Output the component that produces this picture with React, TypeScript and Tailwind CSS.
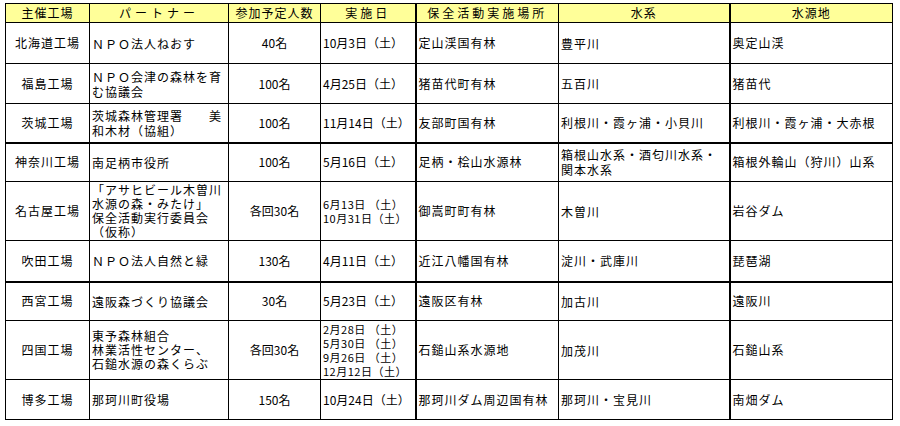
import { Fragment } from "react";
import type { ReactNode } from "react";

type Row = {
  factory: string;
  partner: ReactNode;
  partnerLeading?: string;
  people: string;
  dates: string[];
  place: string;
  river: string[];
  source: string;
  h: string;
  thick?: boolean;
};

const rows: Row[] = [
  {
    factory: "北海道工場",
    partner: "ＮＰＯ法人ねおす",
    people: "40名",
    dates: ["10月3日（土）"],
    place: "定山渓国有林",
    river: ["豊平川"],
    source: "奥定山渓",
    h: "h-[41px]",
  },
  {
    factory: "福島工場",
    partner: (
      <>
        ＮＰＯ会津の森林を育
        <br />
        む協議会
      </>
    ),
    people: "100名",
    dates: ["4月25日（土）"],
    place: "猪苗代町有林",
    river: ["五百川"],
    source: "猪苗代",
    h: "h-[40px]",
  },
  {
    factory: "茨城工場",
    partner: (
      <>
        <span className="flex justify-between pr-[6px]">
          <span>茨城森林管理署</span>
          <span>美</span>
        </span>
        和木材（協組）
      </>
    ),
    people: "100名",
    dates: ["11月14日（土）"],
    place: "友部町国有林",
    river: ["利根川・霞ヶ浦・小貝川"],
    source: "利根川・霞ヶ浦・大赤根",
    h: "h-[39px]",
    thick: true,
  },
  {
    factory: "神奈川工場",
    partner: "南足柄市役所",
    people: "100名",
    dates: ["5月16日（土）"],
    place: "足柄・桧山水源林",
    river: ["箱根山水系・酒匂川水系・", "関本水系"],
    source: "箱根外輪山（狩川）山系",
    h: "h-[39px]",
  },
  {
    factory: "名古屋工場",
    partner: (
      <>
        「アサヒビール木曽川
        <br />
        水源の森・みたけ」
        <br />
        保全活動実行委員会
        <br />
        （仮称）
      </>
    ),
    partnerLeading: "leading-[14px]",
    people: "各回30名",
    dates: ["6月13日 （土）", "10月31日（土）"],
    place: "御嵩町町有林",
    river: ["木曽川"],
    source: "岩谷ダム",
    h: "h-[59px]",
  },
  {
    factory: "吹田工場",
    partner: "ＮＰＯ法人自然と緑",
    people: "130名",
    dates: ["4月11日（土）"],
    place: "近江八幡国有林",
    river: ["淀川・武庫川"],
    source: "琵琶湖",
    h: "h-[41px]",
    thick: true,
  },
  {
    factory: "西宮工場",
    partner: "遠阪森づくり協議会",
    people: "30名",
    dates: ["5月23日（土）"],
    place: "遠阪区有林",
    river: ["加古川"],
    source: "遠阪川",
    h: "h-[39px]",
  },
  {
    factory: "四国工場",
    partner: (
      <>
        東予森林組合
        <br />
        林業活性センター、
        <br />
        石鎚水源の森くらぶ
      </>
    ),
    partnerLeading: "leading-[14px]",
    people: "各回30名",
    dates: ["2月28日 （土）", "5月30日 （土）", "9月26日 （土）", "12月12日（土）"],
    place: "石鎚山系水源地",
    river: ["加茂川"],
    source: "石鎚山系",
    h: "h-[59px]",
  },
  {
    factory: "博多工場",
    partner: "那珂川町役場",
    people: "150名",
    dates: ["10月24日（土）"],
    place: "那珂川ダム周辺国有林",
    river: ["那珂川・宝見川"],
    source: "南畑ダム",
    h: "h-[40px]",
  },
];

function Lines({ items }: { items: string[] }) {
  return (
    <>
      {items.map((t, i) => (
        <Fragment key={t}>
          {i > 0 && <br />}
          {t}
        </Fragment>
      ))}
    </>
  );
}

export default function App() {
  return (
    <div className="min-h-[426px] w-[900px] bg-white pt-[3px] pl-[5px] font-['Noto_Sans_CJK_JP',sans-serif] text-[12px] text-black">
      <table className="w-[887px] table-fixed border-collapse">
        <colgroup>
          <col className="w-[84px]" />
          <col className="w-[139px]" />
          <col className="w-[92px]" />
          <col className="w-[95px]" />
          <col className="w-[143px]" />
          <col className="w-[171px]" />
          <col className="w-[163px]" />
        </colgroup>
        <thead>
          <tr className="h-[19px] bg-[#ffff99] leading-[14px]">
            <th className="border border-black p-0 font-normal tracking-[1px]">主催工場</th>
            <th className="border border-black p-0 font-normal tracking-[4px]">パートナー</th>
            <th className="border border-black p-0 font-normal tracking-[1px]">参加予定人数</th>
            <th className="border border-black border-r-2 p-0 font-normal tracking-[3px]">実施日</th>
            <th className="border border-black p-0 font-normal tracking-[3px]">保全活動実施場所</th>
            <th className="border border-black border-r-2 p-0 font-normal tracking-[1px]">水系</th>
            <th className="border border-black p-0 font-normal tracking-[1px]">水源地</th>
          </tr>
        </thead>
        <tbody>
          {rows.map((r) => {
            const b = r.thick ? "border border-b-2 border-black" : "border border-black";
            const multi = r.dates.length > 1;
            return (
              <tr key={r.factory} className={r.h}>
                <td className={`${b} p-0 text-center tracking-[1px]`}>{r.factory}</td>
                <td className={`${b} p-0 pl-[2px] tracking-[1px] ${r.partnerLeading ?? "leading-[15px]"}`}>
                  {r.partner}
                </td>
                <td className={`${b} p-0 text-center`}>{r.people}</td>
                <td
                  className={`${b} border-r-2 p-0 pl-[2px] whitespace-pre ${
                    multi ? "text-[11px] leading-[14px] tracking-[0.5px]" : ""
                  }`}
                >
                  <Lines items={r.dates} />
                </td>
                <td className={`${b} p-0 pl-[2px] tracking-[1px]`}>{r.place}</td>
                <td className={`${b} border-r-2 p-0 pl-[2px] tracking-[1px] leading-[15px]`}>
                  <Lines items={r.river} />
                </td>
                <td className={`${b} p-0 pl-[2px] tracking-[1px]`}>{r.source}</td>
              </tr>
            );
          })}
        </tbody>
      </table>
    </div>
  );
}
